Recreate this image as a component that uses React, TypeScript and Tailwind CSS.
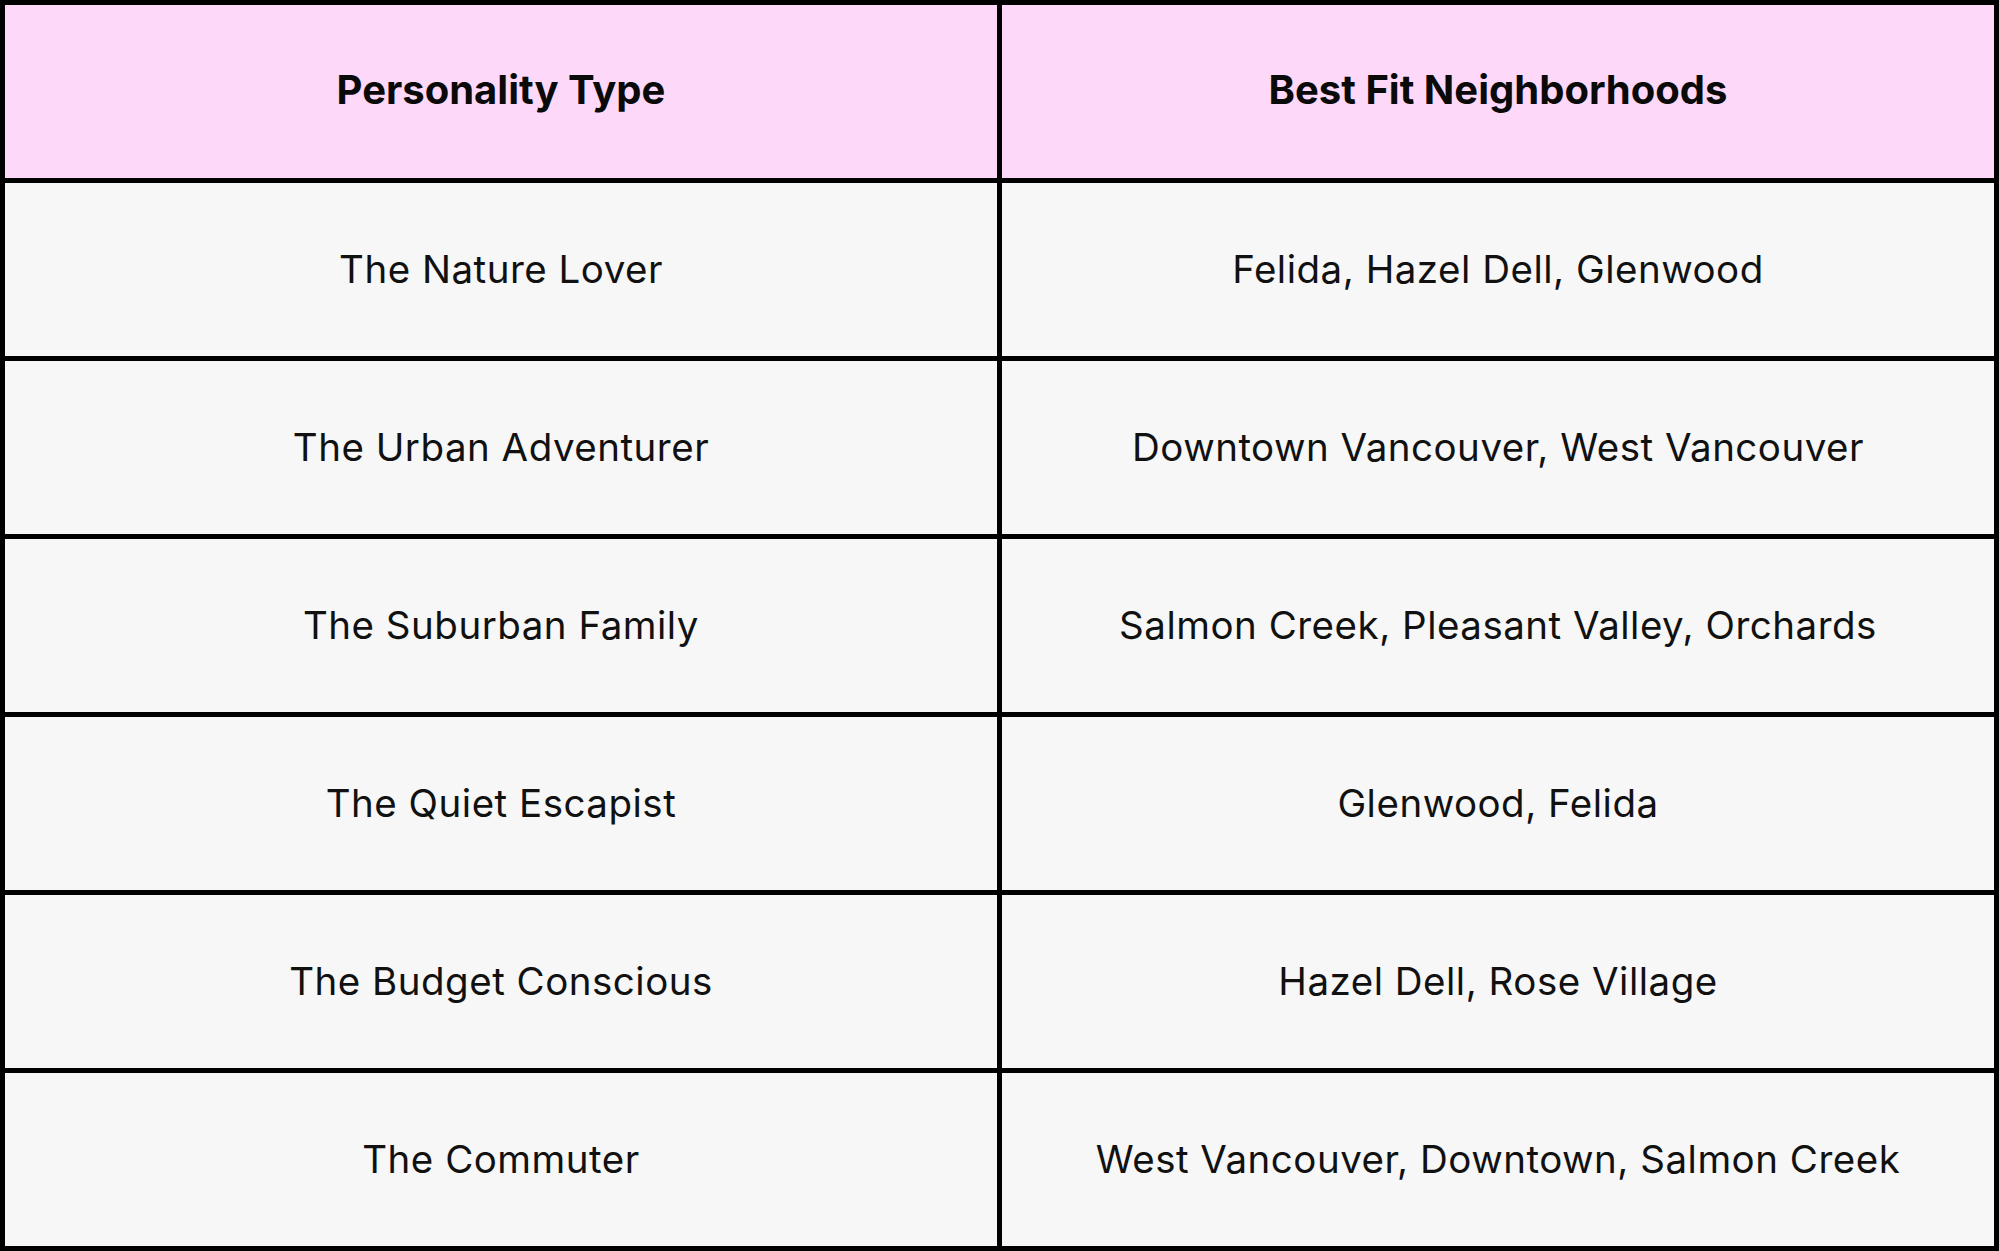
import React from "react";

const rows: [string, string][] = [
  ["The Nature Lover", "Felida, Hazel Dell, Glenwood"],
  ["The Urban Adventurer", "Downtown Vancouver, West Vancouver"],
  ["The Suburban Family", "Salmon Creek, Pleasant Valley, Orchards"],
  ["The Quiet Escapist", "Glenwood, Felida"],
  ["The Budget Conscious", "Hazel Dell, Rose Village"],
  ["The Commuter", "West Vancouver, Downtown, Salmon Creek"],
];

export default function App() {
  return (
    <div
      className="w-[1999px] h-[1251px] bg-black p-[5px]"
      style={{ fontFamily: "Inter, 'Noto Sans', sans-serif" }}
    >
      <div className="grid grid-cols-2 grid-rows-7 gap-[5px] h-full w-full">
        <div className="bg-[#fdd8f8] flex items-center justify-center pb-[3px] text-[40px] font-bold text-[#0a0a0a] tracking-[0px]">
          Personality Type
        </div>
        <div className="bg-[#fdd8f8] flex items-center justify-center pb-[3px] text-[40px] font-bold text-[#0a0a0a] tracking-[0px]">
          Best Fit Neighborhoods
        </div>
        {rows.map(([a, b]) => (
          <React.Fragment key={a}>
            <div className="bg-[#f6f7f6] flex items-center justify-center text-[38.5px] tracking-[0.5px] text-[#111111]">
              {a}
            </div>
            <div className="bg-[#f6f7f6] flex items-center justify-center text-[38.5px] tracking-[0.5px] text-[#111111]">
              {b}
            </div>
          </React.Fragment>
        ))}
      </div>
    </div>
  );
}
